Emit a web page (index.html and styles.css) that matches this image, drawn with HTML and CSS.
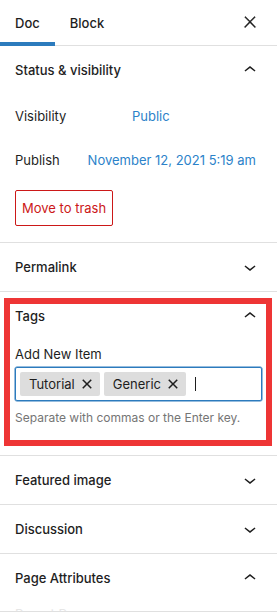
FILE: index.html
```html
<!DOCTYPE html>
<html lang="en">
<head>
<meta charset="utf-8">
<title>Document settings</title>
<link rel="stylesheet" href="styles.css">
</head>
<body>
<div class="sidebar">
  <header class="tabs">
    <button class="tab is-active">Doc</button>
    <button class="tab">Block</button>
    <button class="close" aria-label="Close settings">
      <svg viewBox="0 0 24 24" width="18" height="18"><path d="M13 11.8l6.1-6.3-1-1-6.1 6.2-6.1-6.2-1 1 6.1 6.3-6.5 6.7 1 1 6.5-6.6 6.5 6.6 1-1z"/></svg>
    </button>
  </header>

  <section class="panel">
    <div class="panel-head">
      <span>Status &amp; visibility</span>
      <svg class="chev" viewBox="0 0 24 24" width="24" height="24"><path d="M6.5 12.4L12 8l5.5 4.4-.9 1.2L12 10l-4.6 3.6-.9-1.2z"/></svg>
    </div>
    <div class="panel-body status">
      <div class="row">
        <span class="row-label">Visibility</span>
        <a class="link">Public</a>
      </div>
      <div class="row row-spread">
        <span class="row-label">Publish</span>
        <a class="link">November 12, 2021 5:19 am</a>
      </div>
      <button class="trash">Move to trash</button>
    </div>
  </section>

  <section class="panel">
    <div class="panel-head">
      <span>Permalink</span>
      <svg class="chev" viewBox="0 0 24 24" width="24" height="24"><path d="M17.5 11.6L12 16l-5.5-4.4.9-1.2L12 14l4.6-3.6.9 1.2z"/></svg>
    </div>
  </section>

  <section class="panel tags-panel">
    <div class="panel-head">
      <span>Tags</span>
      <svg class="chev" viewBox="0 0 24 24" width="24" height="24"><path d="M6.5 12.4L12 8l5.5 4.4-.9 1.2L12 10l-4.6 3.6-.9-1.2z"/></svg>
    </div>
    <div class="panel-body tags">
      <label class="field-label">Add New Item</label>
      <div class="token-input">
        <span class="token"><span class="token-text">Tutorial</span><svg viewBox="0 0 24 24" width="24" height="24"><path d="M12 13.06l3.712 3.713 1.061-1.06L13.061 12l3.712-3.712-1.06-1.06L12 10.938 8.288 7.227l-1.061 1.06L10.939 12l-3.712 3.712 1.06 1.061L12 13.061z"/></svg></span>
        <span class="token"><span class="token-text">Generic</span><svg viewBox="0 0 24 24" width="24" height="24"><path d="M12 13.06l3.712 3.713 1.061-1.06L13.061 12l3.712-3.712-1.06-1.06L12 10.938 8.288 7.227l-1.061 1.06L10.939 12l-3.712 3.712 1.06 1.061L12 13.061z"/></svg></span>
        <span class="caret"></span>
      </div>
      <p class="help">Separate with commas or the Enter key.</p>
    </div>
    <div class="highlight"></div>
  </section>

  <section class="panel">
    <div class="panel-head">
      <span>Featured image</span>
      <svg class="chev" viewBox="0 0 24 24" width="24" height="24"><path d="M17.5 11.6L12 16l-5.5-4.4.9-1.2L12 14l4.6-3.6.9 1.2z"/></svg>
    </div>
  </section>

  <section class="panel">
    <div class="panel-head">
      <span>Discussion</span>
      <svg class="chev" viewBox="0 0 24 24" width="24" height="24"><path d="M17.5 11.6L12 16l-5.5-4.4.9-1.2L12 14l4.6-3.6.9 1.2z"/></svg>
    </div>
  </section>

  <section class="panel">
    <div class="panel-head">
      <span>Page Attributes</span>
      <svg class="chev" viewBox="0 0 24 24" width="24" height="24"><path d="M6.5 12.4L12 8l5.5 4.4-.9 1.2L12 10l-4.6 3.6-.9-1.2z"/></svg>
    </div>
    <div class="panel-body attrs">
      <span class="faded">Parent Page:</span>
    </div>
  </section>
</div>
</body>
</html>
```

FILE: styles.css
```css
* { box-sizing: border-box; }

html, body {
  margin: 0;
  padding: 0;
  background: #fff;
}

body {
  font-family: Inter, "Noto Sans", Roboto, sans-serif;
  font-size: 13px;
  color: #1e1e1e;
  width: 277px;
  height: 613px;
  overflow: hidden;
}

button {
  font: inherit;
  color: inherit;
  background: none;
  border: 0;
  padding: 0;
  margin: 0;
  cursor: pointer;
}

.tabs {
  display: flex;
  align-items: stretch;
  height: 46px;
  border-bottom: 1px solid #e0e0e0;
}

.tab {
  position: relative;
  padding: 0 15px;
  font-weight: 500;
  height: 46px;
  margin-bottom: -1px;
  border-bottom: 4px solid transparent;
  padding-top: 3px;
}

.tab.is-active {
  border-bottom-color: #2c7bbd;
}

.close {
  margin-left: auto;
  width: 24px;
  height: 24px;
  align-self: center;
  margin-right: 15px;
  margin-top: -2px;
  display: flex;
  align-items: center;
  justify-content: center;
}

.close svg, .chev { fill: #1e1e1e; }

.close svg path {
  stroke: #1e1e1e;
  stroke-width: 0.6;
}

.panel {
  position: relative;
  border-bottom: 1px solid #e0e0e0;
}

.panel-head {
  height: 48px;
  display: flex;
  align-items: center;
  justify-content: space-between;
  padding: 0 15px;
  font-weight: 500;
}

.panel-body {
  padding: 0 15px;
}

.status {
  padding-top: 4px;
  padding-bottom: 16px;
}

.row {
  display: flex;
  align-items: center;
  height: 36px;
  margin-bottom: 8px;
}

.row-label {
  width: 117px;
  flex: none;
}

.row-spread { justify-content: space-between; }
.row-spread .row-label { width: auto; }

.link {
  color: #2c82c9;
  padding-right: 6px;
}

.trash {
  margin-top: 4px;
  height: 36px;
  padding: 0 6px;
  border: 1px solid #cc1818;
  border-radius: 2px;
  color: #cc1818;
}

.tags {
  padding-bottom: 29px;
}

.field-label {
  display: block;
  line-height: 16px;
  margin-top: 6px;
  margin-bottom: 5px;
}

.token-input {
  display: flex;
  align-items: center;
  gap: 4px;
  height: 34px;
  padding: 0 4px;
  border: 1px solid #2c7bbd;
  box-shadow: 0 0 0 0.5px #2c7bbd;
  border-radius: 2px;
}

.token {
  display: flex;
  align-items: center;
  height: 24px;
  background: #ddd;
  border-radius: 2px;
  padding: 0 1px 0 9px;
}

.token svg {
  fill: #1e1e1e;
}

.caret {
  width: 1px;
  height: 14px;
  background: #1e1e1e;
  margin-left: 5px;
}

.help {
  margin: 9px 0 0;
  font-size: 12px;
  line-height: 16px;
  color: #757575;
}

.highlight {
  position: absolute;
  left: 4px;
  right: 5px;
  top: 6px;
  bottom: 9px;
  border: 6px solid #ee3535;
  pointer-events: none;
}

.attrs {
  height: 9px;
  overflow: hidden;
}

.faded {
  display: block;
  margin-top: 4px;
  color: #e6e6e6;
  line-height: 16px;
}
```
